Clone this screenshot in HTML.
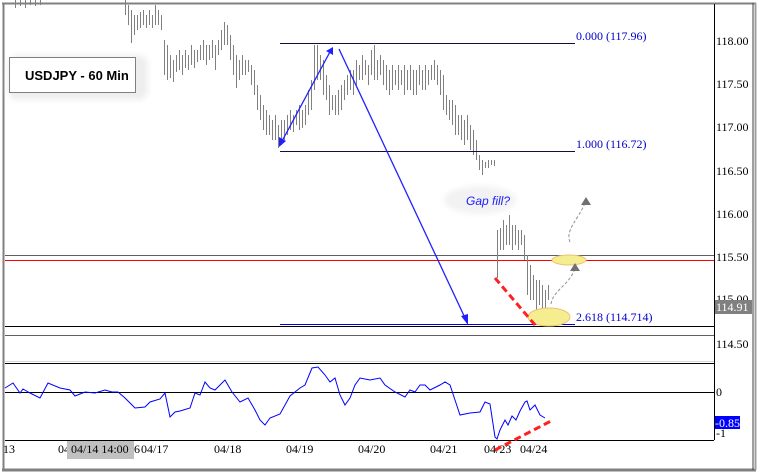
<!DOCTYPE html>
<html><head><meta charset="utf-8"><style>
html,body{margin:0;padding:0;background:#fff;}
svg{display:block;font-family:"Liberation Sans",sans-serif;}
.ax{font-family:"Liberation Serif",serif;font-size:12px;fill:#000;}
</style></head><body>
<svg width="758" height="472" viewBox="0 0 758 472" xmlns="http://www.w3.org/2000/svg">
<defs>
<filter id="sh" x="-50%" y="-50%" width="200%" height="200%"><feGaussianBlur stdDeviation="3"/></filter>
</defs>
<rect width="758" height="472" fill="#fff"/>
<line x1="2" y1="3.5" x2="756" y2="3.5" stroke="#808080" stroke-width="2"/>
<line x1="3.5" y1="3" x2="3.5" y2="470" stroke="#808080" stroke-width="2"/>
<line x1="2" y1="470" x2="756" y2="470" stroke="#808080" stroke-width="3"/>
<line x1="753" y1="3" x2="753" y2="470" stroke="#404040" stroke-width="1"/>
<line x1="755.5" y1="3" x2="755.5" y2="470" stroke="#a0a0a0" stroke-width="2"/>
<line x1="714.5" y1="4" x2="714.5" y2="440" stroke="#000"/>
<line x1="5" y1="440.5" x2="714" y2="440.5" stroke="#000"/>
<line x1="5" y1="361.5" x2="714" y2="361.5" stroke="#d8d8d0" stroke-width="1"/>
<line x1="5" y1="363.5" x2="714" y2="363.5" stroke="#000"/>
<line x1="5" y1="326.5" x2="714" y2="326.5" stroke="#000"/>
<line x1="5" y1="335.5" x2="714" y2="335.5" stroke="#606060"/>
<line x1="5" y1="255.5" x2="714" y2="255.5" stroke="#606060"/>
<line x1="5" y1="260.5" x2="714" y2="260.5" stroke="#ff0000"/>
<line x1="5" y1="392.5" x2="714" y2="392.5" stroke="#000"/>
<g class="ax">
<text x="716" y="45">118.00</text>
<text x="716" y="88">117.50</text>
<text x="716" y="131">117.00</text>
<text x="716" y="175">116.50</text>
<text x="716" y="218">116.00</text>
<text x="716" y="261">115.50</text>
<text x="716" y="303">115.00</text>
<text x="716" y="348">114.50</text>
<text x="716" y="396">0</text>
<text x="716" y="437">-1</text>
</g>
<rect x="715" y="300" width="37" height="14" fill="#808080"/>
<text x="716" y="311" class="ax" style="fill:#fff">114.91</text>
<rect x="715" y="416" width="25" height="13" fill="#0000ff"/>
<text x="715" y="427" class="ax" style="fill:#fff">-0.85</text>
<g class="ax">
<text x="3" y="453">13</text>
<text x="58" y="453">04</text>
<text x="141" y="453">04/17</text>
<text x="214" y="453">04/18</text>
<text x="286" y="453">04/19</text>
<text x="358" y="453">04/20</text>
<text x="430" y="453">04/21</text>
<text x="484" y="453">04/23</text>
<text x="520" y="453">04/24</text>
</g>
<rect x="67" y="441" width="67" height="18" fill="#c0c0c0"/>
<text x="71" y="453" class="ax">04/14 14:00</text>
<text x="134" y="453" class="ax">6</text>
<path transform="translate(0.5,0)" fill="none" stroke="#808080" stroke-width="1" d="M15 0V8M20 0V6M25 0V8M30 0V5M35 0V6M40 0V5
M125 0V15M128 5V25M131 10V43M134 15V35M137 15V30M140 12V28M143 10V25M146 15V28M149 10V25M152 15V28M155 5V25M158 10V25M161 15V30M164 40V75M167 45V80M170 55V78M173 60V82M176 55V72M179 50V70M182 55V75M185 50V68M188 55V70M191 45V65M194 50V68M197 50V62M200 45V60M203 40V60M206 45V65M209 45V60M212 40V58M215 45V70M218 40V55M221 30V50M224 22V45M227 25V45M230 35V60M233 45V75M236 55V88M239 60V80M242 55V75M245 60V75M248 60V72M251 65V85M254 70V95M257 85V110M260 95V120M263 105V130M266 110V135M269 115V135M272 120V140M275 115V140M278 125V148M281 120V145M284 120V140M287 115V135M290 110V130M293 115V132M296 110V125M299 105V130M302 110V128M305 105V125M308 90V115M311 80V110M314 45V90M317 45V80M320 55V80M323 60V95M326 75V100M329 85V115M332 95V110M335 95V115M338 90V115M341 85V110M344 80V100M347 75V95M350 70V90M353 70V95M356 60V85M359 65V80M362 55V80M365 60V75M368 65V85M371 50V75M374 45V80M377 60V80M380 55V75M383 60V85M386 65V90M389 70V95M392 65V90M395 70V85M398 65V90M401 70V85M404 65V95M407 70V90M410 65V90M413 70V95M416 70V95M419 65V85M422 70V90M425 65V90M428 70V85M431 65V80M434 60V80M437 65V85M440 70V95M443 75V110M446 95V115M449 100V120M452 100V125M455 105V135M458 115V135M461 115V140M464 120V145M467 115V140M470 125V150M473 130V155M476 140V160M479 155V170M482 160V175M485 162V168M488 160V168M491 160V165M494 160V166
M497 230V278M500 228V250M503 220V250M506 225V245M509 215V245M512 225V250M515 225V245M518 230V250M521 230V245M524 235V260M527 255V295M530 265V300M533 275V300M536 280V310M539 280V305M542 285V310M545 290V310M548 285V300"/>
<line x1="280" y1="43.5" x2="575" y2="43.5" stroke="#101040"/>
<line x1="280" y1="151.5" x2="575" y2="151.5" stroke="#101040"/>
<line x1="280" y1="324.5" x2="575" y2="324.5" stroke="#0000dd"/>
<text x="576" y="40" font-family="Liberation Serif,serif" font-size="12" fill="#0000cc">0.000 (117.96)</text>
<text x="576" y="148" font-family="Liberation Serif,serif" font-size="12" fill="#0000cc">1.000 (116.72)</text>
<text x="576" y="321" font-family="Liberation Serif,serif" font-size="12" fill="#0000cc">2.618 (114.714)</text>
<rect x="8" y="55" width="140" height="45" rx="10" fill="#eee" filter="url(#sh)"/>
<rect x="9.5" y="57.5" width="126" height="35" fill="#fff" stroke="#808080"/>
<text x="25" y="80" font-size="13" font-weight="bold" fill="#000">USDJPY  - 60 Min</text>
<ellipse cx="480" cy="200" rx="36" ry="14" fill="#f2f2f2" filter="url(#sh)"/>
<text x="466" y="205" font-size="12" font-style="italic" fill="#2020ff">Gap fill?</text>
<g stroke="#2020ff" stroke-width="1.3" fill="#2020ff">
<line x1="281" y1="143" x2="331" y2="50"/>
<polygon points="279,147 279,137 286,141" stroke="none"/>
<polygon points="333,47 326,51 333,55" stroke="none"/>
<line x1="339" y1="49" x2="466" y2="320"/>
<polygon points="468,325 461,316 468,314" stroke="none"/>
</g>
<ellipse cx="549" cy="317" rx="21" ry="9" fill="#f4ee90" stroke="#f0c070"/>
<ellipse cx="569" cy="260" rx="17" ry="5" fill="#f4ee90" stroke="#f0c070"/>
<g fill="none" stroke="#909090" stroke-width="1" stroke-dasharray="3,2">
<path d="M551 304 C553 290,570 285,575 268"/>
<path d="M570 242 C565 230,578 220,585 203"/>
</g>
<polygon points="575,263 570,271 580,271" fill="#707070"/>
<polygon points="586,197 581,205 591,205" fill="#707070"/>
<line x1="495" y1="278" x2="535" y2="325" stroke="#ff2020" stroke-width="3" stroke-dasharray="7,4"/>
<line x1="495" y1="450" x2="551" y2="421" stroke="#ff2020" stroke-width="3" stroke-dasharray="7,4"/>
<polyline fill="none" stroke="#0000ff" stroke-width="1" points="5,388 13,383 20,393 23,389 30,393 40,398 48,383 60,388 70,390 75,396 85,392 95,393 105,390 112,392 118,392 125,398 135,408 145,407 150,402 160,399 165,393 170,417 175,412 180,411 190,408 195,393 200,395 205,382 210,388 215,390 225,380 232,392 240,402 248,398 255,410 260,420 265,425 270,418 280,414 285,405 290,396 300,388 305,385 312,368 318,367 325,375 330,382 335,378 340,395 345,405 350,398 355,385 360,378 370,380 380,378 385,385 395,392 405,397 410,390 415,392 420,385 425,385 430,390 440,385 445,382 450,385 455,400 460,415 470,413 480,412 485,402 490,404 495,437 497,439 500,430 505,420 508,425 512,416 516,420 520,411 525,402 527,401 530,410 535,405 540,415 545,418"/>
</svg>
</body></html>
